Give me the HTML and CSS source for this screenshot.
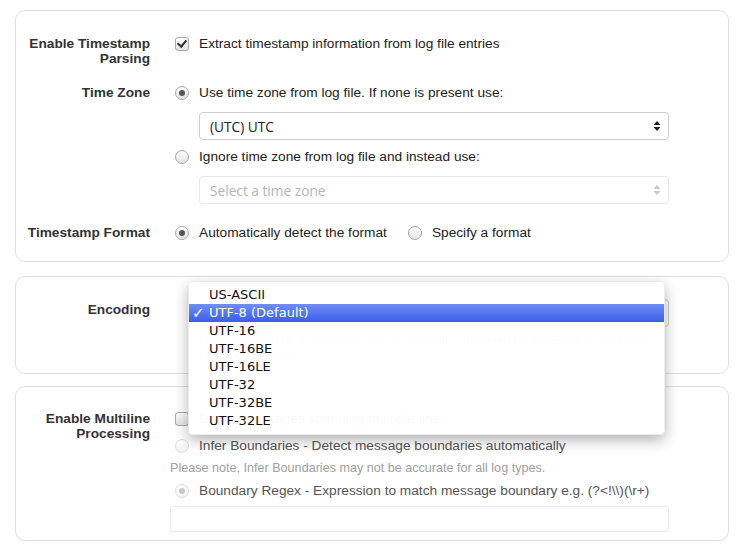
FILE: index.html
```html
<!DOCTYPE html>
<html lang="en">
<head>
    <meta charset="UTF-8">
    <meta name="viewport" content="width=device-width, initial-scale=1.0">
    <title>Log Source Settings</title>
    <link rel="stylesheet" href="styles.css">
</head>
<body>
    <div class="page">
        <section class="panel panel-timestamp">
            <div class="row">
                <div class="label">Enable Timestamp<br>Parsing</div>
                <div class="controls">
                    <div class="line"><span class="checkbox checked"></span>Extract timestamp information from log file entries</div>
                </div>
            </div>
            <div class="row">
                <div class="label">Time Zone</div>
                <div class="controls">
                    <div class="line"><span class="radio checked"></span>Use time zone from log file. If none is present use:</div>
                    <div class="select">
                        <span>(UTC) UTC</span>
                        <svg class="arrows" width="8" height="12" viewBox="0 0 8 12"><path d="M4 1 L7.5 5 L0.5 5 Z M4 11 L7.5 7 L0.5 7 Z"/></svg>
                    </div>
                    <div class="line"><span class="radio"></span>Ignore time zone from log file and instead use:</div>
                    <div class="select disabled">
                        <span>Select a time zone</span>
                        <svg class="arrows" width="8" height="12" viewBox="0 0 8 12"><path d="M4 1 L7.5 5 L0.5 5 Z M4 11 L7.5 7 L0.5 7 Z"/></svg>
                    </div>
                </div>
            </div>
            <div class="row">
                <div class="label">Timestamp Format</div>
                <div class="controls">
                    <div class="line">
                        <span class="radio checked"></span>Automatically detect the format
                        <span class="radio spaced"></span>Specify a format
                    </div>
                </div>
            </div>
        </section>

        <section class="panel panel-encoding">
            <div class="row">
                <div class="label label-select">Encoding</div>
                <div class="controls">
                    <div class="select">
                        <span>UTF-8 (Default)</span>
                        <svg class="arrows" width="8" height="12" viewBox="0 0 8 12"><path d="M4 1 L7.5 5 L0.5 5 Z M4 11 L7.5 7 L0.5 7 Z"/></svg>
                    </div>
                    <p class="help">Note: certain UTF-8 characters are not currently supported by the Filtering and Field Detection features.</p>
                </div>
            </div>
            <ul class="menu">
                <li>US-ASCII</li>
                <li class="active">UTF-8 (Default)</li>
                <li>UTF-16</li>
                <li>UTF-16BE</li>
                <li>UTF-16LE</li>
                <li>UTF-32</li>
                <li>UTF-32BE</li>
                <li>UTF-32LE</li>
            </ul>
        </section>

        <section class="panel panel-multiline">
            <div class="row">
                <div class="label">Enable Multiline<br>Processing</div>
                <div class="controls">
                    <div class="line"><span class="checkbox"></span>Detect messages spanning multiple lines</div>
                    <div class="line muted"><span class="radio disabled"></span>Infer Boundaries - Detect message boundaries automatically</div>
                    <p class="note">Please note, Infer Boundaries may not be accurate for all log types.</p>
                    <div class="line muted"><span class="radio checked disabled"></span>Boundary Regex - Expression to match message boundary e.g. (?&lt;!\\)(\r+)</div>
                    <div class="input disabled"></div>
                </div>
            </div>
        </section>
    </div>
</body>
</html>
```

FILE: styles.css
```css
body {
    margin: 0;
    font-family: "Liberation Sans", Arial, sans-serif;
    font-size: 13.7px;
    color: #333;
    background: #fff;
}

.page {
    padding: 10px 14px 0 15px;
}

.panel {
    position: relative;
    border: 1px solid #dedede;
    border-radius: 10px;
    padding: 25px 59px 20px 0;
    margin-bottom: 14px;
}

.row {
    display: grid;
    grid-template-columns: 134px 1fr;
    column-gap: 20px;
    margin-top: 19px;
}

.row:first-child {
    margin-top: 0;
}

.panel-timestamp .row:last-child {
    margin-top: 21px;
}

.label {
    text-align: right;
    font-weight: bold;
    line-height: 15px;
    color: #333;
}

.label-select {
    padding-top: 3px;
}

.controls {
    display: flex;
    flex-direction: column;
}

.line {
    display: flex;
    align-items: center;
    height: 16px;
    line-height: 16px;
    color: #222;
    white-space: nowrap;
}

.line + .line {
    margin-top: 11px;
}

.select + .line {
    margin-top: 9px;
}

.line.muted {
    color: #555;
}

.checkbox,
.radio {
    flex: none;
    width: 12px;
    height: 12px;
    margin: 0 10px 0 5px;
    border: 1px solid #a9a9a9;
    background: linear-gradient(#fdfdfd, #e4e4e4);
    position: relative;
}

.checkbox {
    border-radius: 3px;
}

.checkbox.checked::after {
    content: "";
    position: absolute;
    left: 3px;
    top: 0;
    width: 4px;
    height: 7px;
    border: solid #333;
    border-width: 0 2px 2px 0;
    transform: rotate(40deg);
}

.radio {
    border-radius: 50%;
}

.radio.checked::after {
    content: "";
    position: absolute;
    left: 3px;
    top: 3px;
    width: 6px;
    height: 6px;
    border-radius: 50%;
    background: #555;
}

.radio.disabled {
    border-color: #dcdcdc;
    background: linear-gradient(#fff, #f2f2f2);
}

.radio.checked.disabled::after {
    background: #c8c8c8;
}

.radio.spaced {
    margin-left: 21px;
}

.select {
    display: flex;
    align-items: center;
    justify-content: space-between;
    height: 26px;
    margin: 11px 0 0 29px;
    padding: 0 7px 0 10px;
    border: 1px solid #cfcfcf;
    border-radius: 4px;
    background: #fff;
    font-family: "Open Sans", "Liberation Sans", sans-serif;
    color: #222;
}

.select .arrows {
    fill: #222;
}

.select.disabled {
    border-color: #e8e8e8;
    color: #b5b5b5;
}

.select.disabled .arrows {
    fill: #c8c8c8;
}

.panel-encoding {
    padding-top: 22px;
    padding-bottom: 8px;
    margin-bottom: 12px;
}

.panel-encoding .select {
    margin-top: 0;
}

.help {
    margin: 6px 0 0 29px;
    font-size: 12px;
    line-height: 16px;
    color: #999;
}

.panel-multiline {
    padding-top: 24px;
    padding-bottom: 8px;
}

.note {
    margin: 6px 0 7px;
    font-size: 12.6px;
    line-height: 16px;
    color: #a0a0a0;
    white-space: nowrap;
}

.input {
    height: 24px;
    margin-top: 7px;
    border: 1px solid #ececec;
    border-radius: 3px;
}

.menu {
    position: absolute;
    left: 172px;
    top: 4px;
    width: 475px;
    margin: 0;
    padding: 4px 0 4px;
    list-style: none;
    background: rgba(255, 255, 255, 0.975);
    border: 1px solid rgba(0, 0, 0, 0.08);
    border-radius: 5px;
    box-shadow: 0 5px 14px rgba(0, 0, 0, 0.3);
    font-family: "DejaVu Sans", sans-serif;
    font-size: 13px;
    color: #111;
    z-index: 10;
}

.menu li {
    height: 18px;
    line-height: 18px;
    padding-left: 20px;
    position: relative;
}

.menu li.active {
    background: linear-gradient(#6f8ef5, #3a5ee9);
    color: #fff;
}

.menu li.active::before {
    content: "\2713";
    position: absolute;
    left: 3px;
    font-size: 15px;
    font-weight: bold;
}
```
